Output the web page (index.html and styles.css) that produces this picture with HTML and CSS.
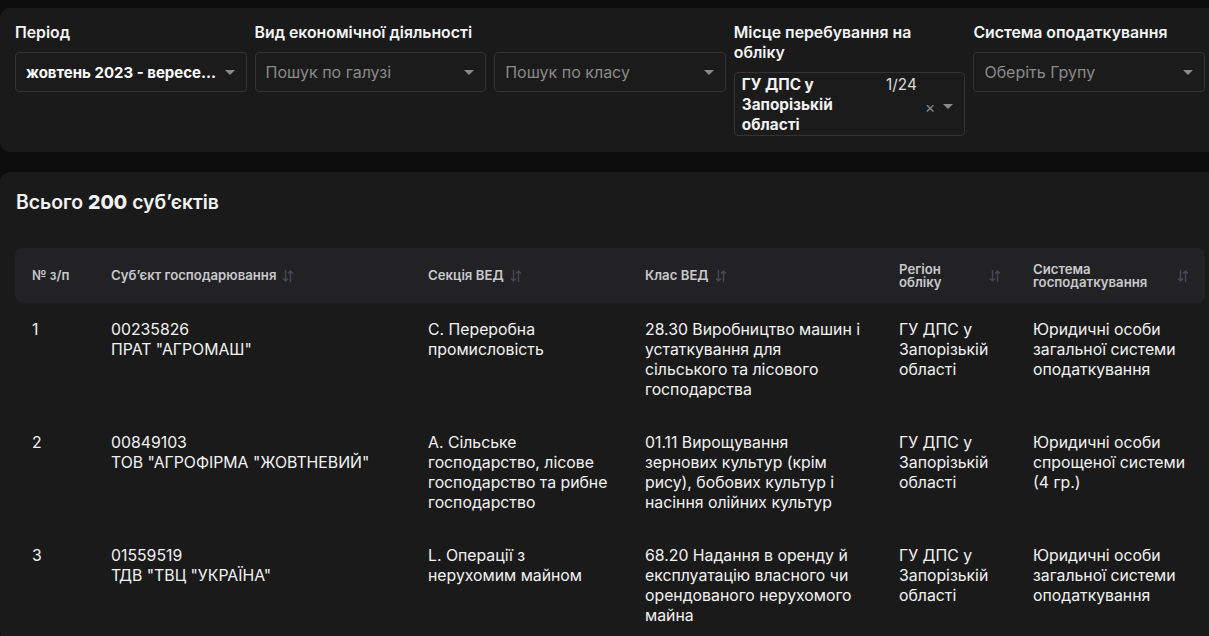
FILE: index.html
```html
<!DOCTYPE html>
<html lang="uk">
<head>
<meta charset="utf-8">
<link rel="stylesheet" href="styles.css">
</head>
<body>
<div class="page">
  <section class="panel filters">
    <div class="field">
      <div class="label">Період</div>
      <div class="select"><span class="value strong">жовтень 2023 - вересе...</span><span class="caret"></span></div>
    </div>
    <div class="field span2">
      <div class="label">Вид економічної діяльності</div>
      <div class="pair">
        <div class="select"><span class="value ph">Пошук по галузі</span><span class="caret"></span></div>
        <div class="select"><span class="value ph">Пошук по класу</span><span class="caret"></span></div>
      </div>
    </div>
    <div class="field">
      <div class="label">Місце перебування на обліку</div>
      <div class="select multi">
        <span class="tag">ГУ ДПС у Запорізькій області</span>
        <span class="count">1/24</span>
        <span class="clear">×</span>
        <span class="caret"></span>
      </div>
    </div>
    <div class="field">
      <div class="label">Система оподаткування</div>
      <div class="select"><span class="value ph">Оберіть Групу</span><span class="caret"></span></div>
    </div>
  </section>

  <section class="panel results">
    <h2 class="total">Всього <b>200</b> суб’єктів</h2>
    <div class="table">
      <div class="row head">
        <div class="cell c1"><span>№ з/п</span></div>
        <div class="cell c2"><span>Суб’єкт господарювання</span><svg class="sort" viewBox="0 0 12 14"><path d="M3.5 1v11M1 9.5l2.5 2.5 2.5-2.5M8.5 13V2M6 4.5l2.5-2.5 2.5 2.5" fill="none" stroke="#434853" stroke-width="1.4"/></svg></div>
        <div class="cell c3"><span>Секція ВЕД</span><svg class="sort" viewBox="0 0 12 14"><path d="M3.5 1v11M1 9.5l2.5 2.5 2.5-2.5M8.5 13V2M6 4.5l2.5-2.5 2.5 2.5" fill="none" stroke="#434853" stroke-width="1.4"/></svg></div>
        <div class="cell c4"><span>Клас ВЕД</span><svg class="sort" viewBox="0 0 12 14"><path d="M3.5 1v11M1 9.5l2.5 2.5 2.5-2.5M8.5 13V2M6 4.5l2.5-2.5 2.5 2.5" fill="none" stroke="#434853" stroke-width="1.4"/></svg></div>
        <div class="cell c5 wrap"><span>Регіон обліку</span><svg class="sort" viewBox="0 0 12 14"><path d="M3.5 1v11M1 9.5l2.5 2.5 2.5-2.5M8.5 13V2M6 4.5l2.5-2.5 2.5 2.5" fill="none" stroke="#434853" stroke-width="1.4"/></svg></div>
        <div class="cell c6 wrap"><span>Система господаткування</span><svg class="sort" viewBox="0 0 12 14"><path d="M3.5 1v11M1 9.5l2.5 2.5 2.5-2.5M8.5 13V2M6 4.5l2.5-2.5 2.5 2.5" fill="none" stroke="#434853" stroke-width="1.4"/></svg></div>
      </div>
      <div class="row">
        <div class="cell c1">1</div>
        <div class="cell c2">00235826<br>ПРАТ "АГРОМАШ"</div>
        <div class="cell c3">C. Переробна промисловість</div>
        <div class="cell c4">28.30 Виробництво машин і устаткування для сільського та лісового господарства</div>
        <div class="cell c5">ГУ ДПС у Запорізькій області</div>
        <div class="cell c6">Юридичні особи загальної системи оподаткування</div>
      </div>
      <div class="row">
        <div class="cell c1">2</div>
        <div class="cell c2">00849103<br>ТОВ "АГРОФІРМА "ЖОВТНЕВИЙ"</div>
        <div class="cell c3">A. Сільське господарство, лісове господарство та рибне господарство</div>
        <div class="cell c4">01.11 Вирощування зернових культур (крім рису), бобових культур і насіння олійних культур</div>
        <div class="cell c5">ГУ ДПС у Запорізькій області</div>
        <div class="cell c6">Юридичні особи спрощеної системи (4 гр.)</div>
      </div>
      <div class="row">
        <div class="cell c1">3</div>
        <div class="cell c2">01559519<br>ТДВ "ТВЦ "УКРАЇНА"</div>
        <div class="cell c3">L. Операції з нерухомим майном</div>
        <div class="cell c4">68.20 Надання в оренду й експлуатацію власного чи орендованого нерухомого майна</div>
        <div class="cell c5">ГУ ДПС у Запорізькій області</div>
        <div class="cell c6">Юридичні особи загальної системи оподаткування</div>
      </div>
    </div>
  </section>
</div>
</body>
</html>
```

FILE: styles.css
```css
* { box-sizing: border-box; margin: 0; padding: 0; }
html, body { background: #0d0d0d; height: 100%; }
body {
  font-family: Inter, "Noto Sans", "DejaVu Sans", sans-serif;
  color: #f2f2f2;
  overflow: hidden;
}
.page {
  padding-top: 8px;
  display: flex;
  flex-direction: column;
  gap: 20px;
  min-height: 100%;
}
.panel {
  background: #1a1a1a;
  border-radius: 10px 0 0 10px;
}
.filters {
  padding: 15px 4px 16px 15px;
  display: grid;
  grid-template-columns: repeat(5, 1fr);
  column-gap: 8px;
  align-items: start;
}
.field { display: flex; flex-direction: column; min-width: 0; }
.span2 { grid-column: span 2; }
.pair { display: grid; grid-template-columns: 1fr 1fr; column-gap: 8px; }
.label {
  font-size: 15.8px;
  font-weight: 600;
  line-height: 20px;
  margin-bottom: 9px;
  color: #f5f5f5;
}
.select {
  height: 40px;
  border: 1px solid #333336;
  border-radius: 4px;
  background: #1b1b1b;
  display: flex;
  align-items: center;
  padding: 0 11px 0 10px;
  gap: 8px;
}
.value {
  flex: 1;
  font-size: 15.8px;
  white-space: nowrap;
  min-width: 0;
}
.strong { font-weight: 700; color: #fafafa; font-size: 15px; }
.ph { color: #8a8a8a; font-size: 16px; }
.caret {
  flex: none;
  width: 0; height: 0;
  border-left: 5px solid transparent;
  border-right: 5px solid transparent;
  border-top: 5px solid #8a8a8a;
}
.multi {
  height: 64px;
  align-items: flex-start;
  padding: 2px 11px 0 7px;
}
.tag {
  width: 142px;
  font-size: 15.3px;
  font-weight: 700;
  line-height: 20px;
}
.count {
  font-size: 15.3px;
  line-height: 20px;
  color: #dcdcdc;
  flex: 1;
}
.clear {
  align-self: center;
  color: #8a8a8a;
  font-size: 16px;
  line-height: 1;
  margin-top: 3px;
}
.multi .caret { align-self: center; margin-top: 2px; }

.results {
  flex: 1;
  padding: 16px 4px 0 15px;
}
.total {
  font-size: 19.4px;
  font-weight: 600;
  line-height: 28px;
  margin-bottom: 32px;
  padding-left: 1px;
}
.total b { font-weight: 800; }
.table { display: flex; flex-direction: column; }
.row {
  display: grid;
  grid-template-columns: 80px 317px 217px 254px 134px 188px;
  padding: 17px 0 16px;
  font-size: 15.8px;
  line-height: 20px;
}
.head {
  background: #222224;
  border-radius: 8px;
  height: 55px;
  padding: 0;
  align-items: center;
  font-size: 13.2px;
  font-weight: 600;
  color: #c9c9cc;
  line-height: 13px;
}
.cell { padding: 0 16px 0 16px; }
.c1 { padding-left: 17px; }
.row .c4 { padding-right: 21px; }
.head .cell {
  display: flex;
  align-items: center;
  gap: 6px;
}
.head .wrap { justify-content: space-between; padding-right: 16px; }
.head .wrap span { flex: 0 1 auto; }
.sort { width: 12px; height: 14px; flex: none; }
```
